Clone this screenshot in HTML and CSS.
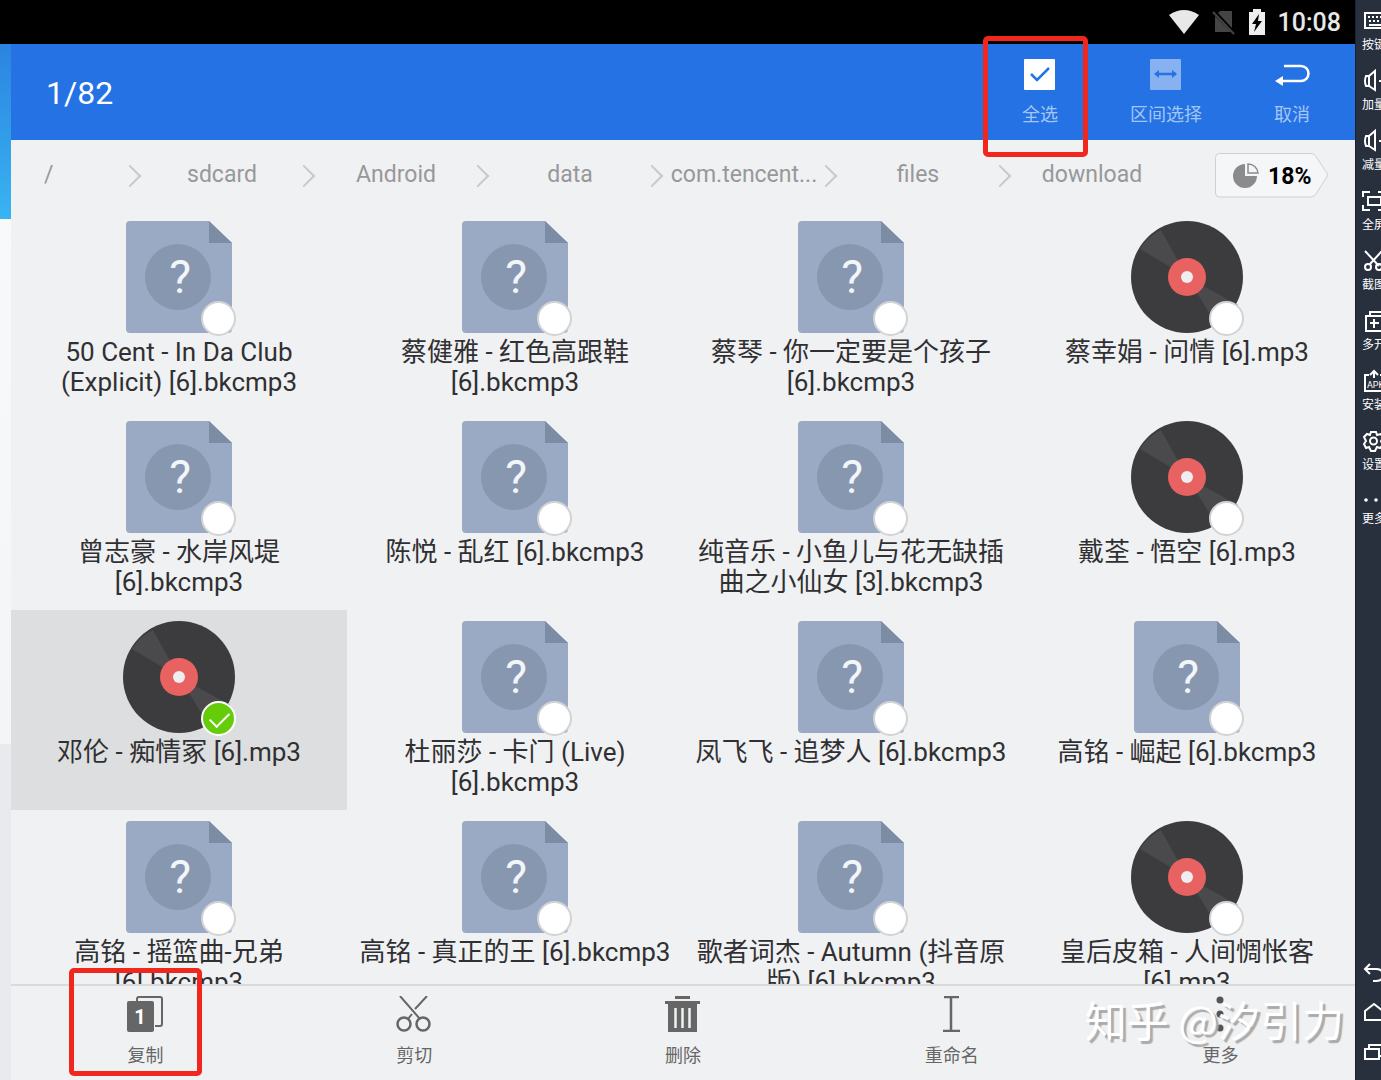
FILE: index.html
```html
<!DOCTYPE html>
<html lang="zh-CN">
<head>
<meta charset="utf-8">
<meta name="viewport" content="width=device-width, initial-scale=1">
<title>download</title>
<link rel="stylesheet" href="styles.css">
</head>
<body>
<svg class="defs" aria-hidden="true">
  <symbol id="unknown" viewBox="0 0 112 112">
    <path fill="#9aaac5" d="M7 0h79l23 22v86a4 4 0 0 1-4 4H7a4 4 0 0 1-4-4V4a4 4 0 0 1 4-4z"/>
    <path fill="#7b8ca4" d="M86 0l23 22H86z"/>
    <circle cx="55" cy="56" r="33" fill="#8797b0"/>
    <text x="57" y="72" class="glyph">?</text>
  </symbol>
  <symbol id="disc" viewBox="0 0 112 112">
    <circle cx="56" cy="56" r="56" fill="#3c3c3e"/>
    <path fill="#4a4a4c" d="M56 56L9 28Q17 15 30 9zM56 56l31 50q12-7 20-22z"/>
    <circle cx="56" cy="56" r="19" fill="#e86261"/>
    <circle cx="56" cy="56" r="6" fill="#eeeef0"/>
  </symbol>
</svg>
<div class="screen">
  <div class="status">
    <svg width="32" height="26" viewBox="0 0 32 26"><path fill="#e8e8e8" d="M1 6Q16-4 31 6L16 25z"/></svg>
    <svg width="24" height="26" viewBox="0 0 24 26"><path fill="#444" d="M8 2h12v17L6 4zM3 7l16 16H3z"/><path stroke="#444" stroke-width="2" d="M1 3l21 22"/></svg>
    <svg width="18" height="26" viewBox="0 0 18 26"><path fill="#eee" d="M1 3h4V0h8v3h4v23H1z"/><path fill="#000" d="M11 5L4 15h4l-2 8 8-11h-4z"/></svg>
    <time>10:08</time>
  </div>
  <div class="stage">
    <div class="backdrop"></div>
    <div class="app">
      <header class="topbar">
        <h1>1/82</h1>
        <button class="action marked-top" type="button">
          <svg width="36" height="36" viewBox="0 0 36 36"><rect x="2" y="2" width="31" height="31" rx="1" fill="#fff"/><path d="M9 17l6 6 12-12" fill="none" stroke="#2472e4" stroke-width="2.500"/></svg>
          <span>全选</span>
        </button>
        <button class="action" type="button">
          <svg width="36" height="36" viewBox="0 0 36 36"><rect x="2" y="2" width="31" height="31" rx="1" fill="#87b1f0"/><path d="M8 17h20" stroke="#2472e4" stroke-width="2.500"/><path fill="#2472e4" d="M6 17l5-4v8zM29 17l-5-4v8z"/></svg>
          <span>区间选择</span>
        </button>
        <button class="action" type="button">
          <svg width="36" height="36" viewBox="0 0 36 36"><path d="M10 9h17a7.500 7.500 0 0 1 0 15H7" fill="none" stroke="#fff" stroke-width="2.500"/><path fill="#fff" d="M1 24l8-5v10z"/></svg>
          <span>取消</span>
        </button>
      </header>
      <nav class="crumbs">
        <a href="#">/</a><a href="#">sdcard</a><a href="#">Android</a><a href="#">data</a><a href="#">com.tencent...</a><a href="#">files</a><a href="#">download</a>
        <button class="usage" type="button">
          <svg class="tag" width="114" height="45" viewBox="0 0 114 45"><path fill="#f5f6f7" stroke="#cfd0d2" d="M4.500.5H96q3 0 5 3L113 22 101 41q-2 3-5 3H4.500q-4 0-4-4V4.500q0-4 4-4z"/></svg>
          <svg width="28" height="28" viewBox="0 0 28 28"><path fill="#8b8b8d" d="M13 1v12h12A12 12 0 1 1 13 1z"/><path fill="none" stroke="#8b8b8d" stroke-width="1.500" d="M16 1v9h10A10 10 0 0 0 16 1z"/></svg>
          <span>18%</span>
        </button>
      </nav>
      <main class="files">
        <label class="file"><span class="thumb"><svg><use href="#unknown"/></svg><input type="checkbox"></span><span class="name">50 Cent - In Da Club (Explicit) [6].bkcmp3</span></label>
        <label class="file"><span class="thumb"><svg><use href="#unknown"/></svg><input type="checkbox"></span><span class="name">蔡健雅 - 红色高跟鞋 [6].bkcmp3</span></label>
        <label class="file"><span class="thumb"><svg><use href="#unknown"/></svg><input type="checkbox"></span><span class="name">蔡琴 - 你一定要是个孩子 [6].bkcmp3</span></label>
        <label class="file"><span class="thumb"><svg><use href="#disc"/></svg><input type="checkbox"></span><span class="name">蔡幸娟 - 问情 [6].mp3</span></label>
        <label class="file"><span class="thumb"><svg><use href="#unknown"/></svg><input type="checkbox"></span><span class="name">曾志豪 - 水岸风堤 [6].bkcmp3</span></label>
        <label class="file"><span class="thumb"><svg><use href="#unknown"/></svg><input type="checkbox"></span><span class="name">陈悦 - 乱红 [6].bkcmp3</span></label>
        <label class="file"><span class="thumb"><svg><use href="#unknown"/></svg><input type="checkbox"></span><span class="name">纯音乐 - 小鱼儿与花无缺插曲之小仙女 [3].bkcmp3</span></label>
        <label class="file"><span class="thumb"><svg><use href="#disc"/></svg><input type="checkbox"></span><span class="name">戴荃 - 悟空 [6].mp3</span></label>
        <label class="file"><span class="thumb"><svg><use href="#disc"/></svg><input type="checkbox" checked></span><span class="name">邓伦 - 痴情冢 [6].mp3</span></label>
        <label class="file"><span class="thumb"><svg><use href="#unknown"/></svg><input type="checkbox"></span><span class="name">杜丽莎 - 卡门 (Live) [6].bkcmp3</span></label>
        <label class="file"><span class="thumb"><svg><use href="#unknown"/></svg><input type="checkbox"></span><span class="name">凤飞飞 - 追梦人 [6].bkcmp3</span></label>
        <label class="file"><span class="thumb"><svg><use href="#unknown"/></svg><input type="checkbox"></span><span class="name">高铭 - 崛起 [6].bkcmp3</span></label>
        <label class="file"><span class="thumb"><svg><use href="#unknown"/></svg><input type="checkbox"></span><span class="name">高铭 - 摇篮曲-兄弟 [6].bkcmp3</span></label>
        <label class="file"><span class="thumb"><svg><use href="#unknown"/></svg><input type="checkbox"></span><span class="name">高铭 - 真正的王 [6].bkcmp3</span></label>
        <label class="file"><span class="thumb"><svg><use href="#unknown"/></svg><input type="checkbox"></span><span class="name">歌者词杰 - Autumn (抖音原版) [6].bkcmp3</span></label>
        <label class="file"><span class="thumb"><svg><use href="#disc"/></svg><input type="checkbox"></span><span class="name">皇后皮箱 - 人间惆怅客 [6].mp3</span></label>
      </main>
      <footer class="tools">
        <button class="tool marked-copy" type="button">
          <svg width="36" height="36" viewBox="0 0 36 36"><path fill="none" stroke="#666" stroke-width="2" d="M10 5V3q0-2 2-2h21q2 0 2 2v25q0 2-2 2h-5"/><rect y="5" width="27" height="31" rx="2" fill="#666"/><text x="13" y="28" class="count">1</text></svg>
          <span>复制</span>
        </button>
        <button class="tool" type="button">
          <svg width="36" height="36" viewBox="0 0 36 36" fill="none" stroke="#666"><path stroke-width="2" d="M4 0l20 23M31 0L19 13M16 18l-4 5"/><circle cx="8" cy="28" r="6.500" stroke-width="2.500"/><circle cx="27" cy="28" r="6.500" stroke-width="2.500"/></svg>
          <span>剪切</span>
        </button>
        <button class="tool" type="button">
          <svg width="36" height="36" viewBox="0 0 36 36"><path fill="#666" d="M10 0h15v3H10zM0 5h35v3h-3v28H3V8H0z"/><path stroke="#f0f1f3" stroke-width="2.500" d="M10.500 12v20M17.500 12v20M24.500 12v20"/></svg>
          <span>删除</span>
        </button>
        <button class="tool" type="button">
          <svg width="36" height="36" viewBox="0 0 36 36"><path fill="none" stroke="#666" stroke-width="2.500" d="M10 1h15M17 1v33M9 35h17"/></svg>
          <span>重命名</span>
        </button>
        <button class="tool" type="button">
          <svg width="36" height="36" viewBox="0 0 36 36" fill="#555"><circle cx="17" cy="4" r="3.500"/><circle cx="17" cy="18" r="3.500"/><circle cx="17" cy="32" r="3.500"/></svg>
          <span>更多</span>
        </button>
        <div class="watermark">知乎 @汐引力</div>
      </footer>
    </div>
  </div>
</div>
<aside class="side">
  <button type="button"><svg height="22" viewBox="0 0 22 22"><path d="M3 3h22v15H3z"/><path stroke-dasharray="2 2" d="M6 7h18M7 11h18"/><path d="M7 15h14"/></svg>按键</button>
  <button type="button"><svg height="22" viewBox="0 0 22 22"><path d="M13 1v19l-6-4H4q-2-5 0-10h3zM7 6v10M17 11h6"/></svg>加量</button>
  <button type="button"><svg height="22" viewBox="0 0 22 22"><path d="M13 1v19l-6-4H4q-2-5 0-10h3zM7 6v10M17 11h6"/></svg>减量</button>
  <button type="button"><svg height="22" viewBox="0 0 22 22"><path d="M8 2H1v5M1 15v5h7M16 2h6M16 20h6M6 7h13v8H6z"/></svg>全屏</button>
  <button type="button"><svg height="22" viewBox="0 0 22 22"><path d="M3 1l14 15M20 1L8 14"/><circle cx="6" cy="17" r="3"/><circle cx="17" cy="17" r="3"/></svg>截图</button>
  <button type="button"><svg height="22" viewBox="0 0 22 22"><path d="M4 6h16v15H4zM8 6V2h16v14M12 9v9M8 13h9"/></svg>多开</button>
  <button type="button"><svg height="22" viewBox="0 0 22 22"><path d="M7 5H3v16h20V5h-5M12 8V2M8 5l4-4 4 4"/><text x="5" y="18">APK</text></svg>安装</button>
  <button type="button"><svg height="22" viewBox="0 0 22 22"><path d="M9 2h5l1 3 4-1 2 4-2 3 2 4-3 3-3-1-2 4H9l-2-4-3 1-2-4 2-3-2-4 3-3 3 1z"/><circle cx="11.500" cy="11" r="3.500"/></svg>设置</button>
  <button class="more" type="button"><svg height="16" viewBox="0 0 22 16"><circle class="dot" cx="4" cy="10" r="1.800"/><circle class="dot" cx="14" cy="10" r="1.800"/></svg>更多</button>
  <div class="keys">
    <button type="button" aria-label="返回"><svg height="22" viewBox="0 0 22 22"><path d="M8 3L3 8l5 5M3 8h11q7 0 7 6t-7 6h-3"/></svg></button>
    <button type="button" aria-label="主页"><svg height="22" viewBox="0 0 22 22"><path d="M3 10l9-7 9 7v9H3z"/></svg></button>
    <button type="button" aria-label="最近"><svg height="22" viewBox="0 0 22 22"><path d="M3 8h14v10H3zM7 7V4h15v11h-5"/></svg></button>
  </div>
</aside>
</body>
</html>
```
FILE: styles.css
```css
* { box-sizing: border-box; }
body {
  margin: 0;
  height: 100vh;
  display: flex;
  overflow: hidden;
  background: #f0f1f3;
  font-family: Roboto, "Noto Sans CJK SC", sans-serif;
}
button {
  margin: 0;
  padding: 0;
  border: 0;
  background: none;
  font: inherit;
  color: inherit;
}
svg { display: block; flex: none; }
.defs { position: absolute; width: 0; height: 0; visibility: hidden; }

.screen { flex: 1; min-width: 0; display: flex; flex-direction: column; }
.status {
  height: 44px;
  flex: none;
  display: flex;
  align-items: center;
  justify-content: flex-end;
  gap: 12px;
  padding-right: 14px;
  background: #000;
  color: #e8e8e8;
  font-size: 25px;
  line-height: 34px;
  font-weight: 500;
}
.status time { padding-top: 2px; }
.stage { flex: 1; min-height: 0; display: flex; }
.backdrop {
  width: 11px;
  flex: none;
  background: linear-gradient(#2b84e0, #38b4f2 175px, #f8f9fb 175px, #f4f5f7 700px, #e9eaed 700px);
}
.app { flex: 1; min-width: 0; display: flex; flex-direction: column; }

.topbar {
  height: 96px;
  flex: none;
  display: flex;
  background: #2472e4;
}
.topbar h1 {
  flex: 1;
  margin: 0;
  padding-left: 35px;
  line-height: 98px;
  font-size: 32px;
  font-weight: 400;
  color: #fff;
}
.action, .tool {
  position: relative;
  display: flex;
  flex-direction: column;
  align-items: center;
  font-size: 18px;
  line-height: 24px;
}
.action { width: 126px; padding-top: 13px; gap: 10px; color: #a3c6f7; }

.marked-top::after, .marked-copy::after {
  content: "";
  position: absolute;
  z-index: 2;
  border: 5px solid #f1261c;
  border-radius: 5px;
}
.marked-top::after { inset: -8px 15px -17px 6px; }
.marked-copy::after { inset: -18px 78px 4px 58px; }

.crumbs {
  height: 70px;
  flex: none;
  display: flex;
  align-items: flex-start;
}
.crumbs a {
  position: relative;
  width: 174px;
  line-height: 70px;
  font-size: 23px;
  text-align: center;
  white-space: nowrap;
  color: #97989a;
  text-decoration: none;
}
.crumbs a:first-child { width: 124px; padding-left: 33px; text-align: left; }
.crumbs a + a::before {
  content: "";
  position: absolute;
  left: -13px;
  top: 28px;
  width: 14px;
  height: 14px;
  border: solid #c8c9cb;
  border-width: 2px 2px 0 0;
  transform: rotate(45deg);
}
.usage {
  position: relative;
  width: 114px;
  height: 45px;
  margin: 13px 26px 0 auto;
  padding: 2px 0 0 17px;
  display: flex;
  align-items: center;
  gap: 8px;
  font-size: 23px;
  font-weight: 700;
  color: #000;
}
.usage .tag { position: absolute; left: 0; top: 0; z-index: -1; }

.files {
  flex: 1;
  min-height: 0;
  overflow: hidden;
  display: grid;
  grid-template-columns: repeat(4, 1fr);
  grid-auto-rows: 200px;
}
.file {
  display: flex;
  flex-direction: column;
  align-items: center;
  gap: 4px;
  padding: 11px 12px 0;
}
.file:has(:checked) { background: #dddee0; }
.thumb { position: relative; height: 112px; }
.thumb svg { width: 112px; height: 112px; }
.thumb input {
  appearance: none;
  position: absolute;
  right: -1px;
  bottom: -3px;
  width: 35px;
  height: 35px;
  margin: 0;
  border: 2px solid #d2d3d5;
  border-radius: 50%;
  background: #fff;
}
.thumb input:checked { background: #66cc0a; border-color: #fff; }
.thumb input:checked::after {
  content: "";
  display: block;
  width: 17px;
  height: 9px;
  margin: 9px 0 0 7px;
  border: solid #fff;
  border-width: 0 0 2px 2px;
  transform: rotate(-45deg);
}
.name { font-size: 26px; line-height: 30px; text-align: center; color: #303032; }
.glyph { font: 46px Roboto, sans-serif; fill: #f2f5fa; text-anchor: middle; }

.tools {
  position: relative;
  height: 96px;
  flex: none;
  display: flex;
  border-top: 2px solid #d9dadc;
  color: #666;
}
.tool { flex: 1; padding-top: 10px; gap: 12px; }
.count { font: 700 20px Roboto, sans-serif; fill: #fff; text-anchor: middle; }
.watermark {
  position: absolute;
  right: 11px;
  top: 5px;
  font-family: "Noto Sans CJK SC", sans-serif;
  font-size: 42px;
  line-height: 56px;
  white-space: nowrap;
  color: #fff;
  text-shadow: 3px 3px 1px #aaa;
}

.side {
  width: 26px;
  flex: none;
  overflow: hidden;
  display: flex;
  flex-direction: column;
  padding: 10px 0 17px 6px;
  border-left: 1px solid #1a2230;
  background: #282f3d;
  color: #fff;
}
.side button {
  width: 26px;
  height: 60px;
  flex: none;
  display: flex;
  flex-direction: column;
  gap: 5px;
  font-size: 12px;
  line-height: 16px;
  text-align: left;
  white-space: nowrap;
}
.side svg { width: 22px; overflow: visible; fill: none; stroke: #fff; stroke-width: 2; }
.side text { font: 9px Roboto, sans-serif; fill: #fff; stroke: none; }
.side .dot { fill: #fff; stroke: none; }
.keys { margin-top: auto; display: flex; flex-direction: column; gap: 18px; }
.keys button { height: 22px; }
```
